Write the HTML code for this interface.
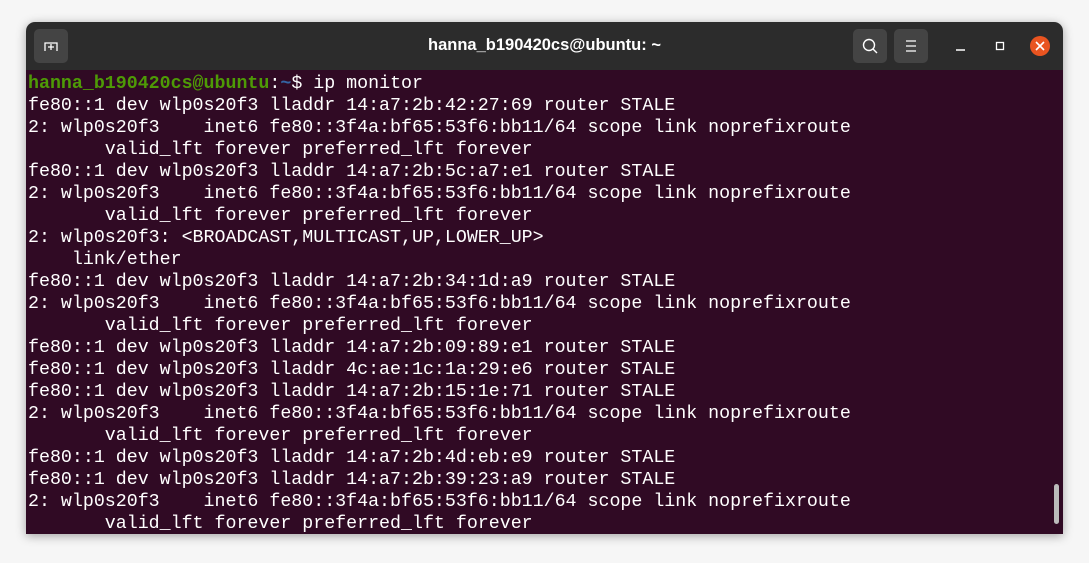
<!DOCTYPE html>
<html><head><style>
body{margin:0;width:1089px;height:563px;background:#f6f6f6;overflow:hidden;font-family:"Liberation Sans",sans-serif}
.win{position:absolute;left:26px;top:22px;width:1037px;height:512px;border-radius:9px 9px 0 0;overflow:hidden;box-shadow:0 2px 10px rgba(0,0,0,.35)}
.tb{height:48px;background:#2c2c2c;position:relative;color:#fff}
.title{position:absolute;left:0;right:0;top:14px;text-align:center;font-weight:bold;font-size:16.5px}
.btn{position:absolute;top:7px;width:34px;height:34px;background:#444;border-radius:5px}
.term{position:absolute;top:48px;left:0;right:0;bottom:0;background:#300a24;color:#fff;font-family:"Liberation Mono",monospace;font-size:18.3px;line-height:22px;padding:3px 0 0 2px;white-space:pre}
.g{color:#4e9a06;font-weight:bold}.b{color:#3465a4;font-weight:bold}
.sb{position:absolute;right:4px;bottom:10px;width:5px;height:40px;background:#bbb;border-radius:3px}
</style></head><body>
<div class="win">
<div class="tb">
<div class="btn" style="left:8px"><svg width="34" height="34"><path d="M11 22V14h12v8M17 15v6M14 18h6" stroke="#fff" stroke-width="1.3" fill="none"/></svg></div>
<div class="title">hanna_b190420cs@ubuntu: ~</div>
<div class="btn" style="left:827px"><svg width="34" height="34"><circle cx="16" cy="16" r="5.5" stroke="#fff" stroke-width="1.4" fill="none"/><path d="M20 20l4 4" stroke="#fff" stroke-width="1.4"/></svg></div>
<div class="btn" style="left:868px"><svg width="34" height="34"><path d="M12 12h10M12 17h10M12 22h10" stroke="#fff" stroke-width="1.3"/></svg></div>
<svg style="position:absolute;left:920px;top:10px" width="110" height="30"><path d="M10 18h9" stroke="#fff" stroke-width="1.5"/><rect x="50.5" y="10.5" width="7" height="7" stroke="#fff" stroke-width="1.3" fill="none"/><circle cx="94" cy="14" r="10" fill="#e95420"/><path d="M90 10l8 8M98 10l-8 8" stroke="#fff" stroke-width="1.6"/></svg>
</div>
<div class="term"><span class="g">hanna_b190420cs@ubuntu</span>:<span class="b">~</span>$ ip monitor
fe80::1 dev wlp0s20f3 lladdr 14:a7:2b:42:27:69 router STALE
2: wlp0s20f3    inet6 fe80::3f4a:bf65:53f6:bb11/64 scope link noprefixroute
       valid_lft forever preferred_lft forever
fe80::1 dev wlp0s20f3 lladdr 14:a7:2b:5c:a7:e1 router STALE
2: wlp0s20f3    inet6 fe80::3f4a:bf65:53f6:bb11/64 scope link noprefixroute
       valid_lft forever preferred_lft forever
2: wlp0s20f3: &lt;BROADCAST,MULTICAST,UP,LOWER_UP&gt;
    link/ether
fe80::1 dev wlp0s20f3 lladdr 14:a7:2b:34:1d:a9 router STALE
2: wlp0s20f3    inet6 fe80::3f4a:bf65:53f6:bb11/64 scope link noprefixroute
       valid_lft forever preferred_lft forever
fe80::1 dev wlp0s20f3 lladdr 14:a7:2b:09:89:e1 router STALE
fe80::1 dev wlp0s20f3 lladdr 4c:ae:1c:1a:29:e6 router STALE
fe80::1 dev wlp0s20f3 lladdr 14:a7:2b:15:1e:71 router STALE
2: wlp0s20f3    inet6 fe80::3f4a:bf65:53f6:bb11/64 scope link noprefixroute
       valid_lft forever preferred_lft forever
fe80::1 dev wlp0s20f3 lladdr 14:a7:2b:4d:eb:e9 router STALE
fe80::1 dev wlp0s20f3 lladdr 14:a7:2b:39:23:a9 router STALE
2: wlp0s20f3    inet6 fe80::3f4a:bf65:53f6:bb11/64 scope link noprefixroute
       valid_lft forever preferred_lft forever</div>
<div class="sb"></div>
</div>
</body></html>
